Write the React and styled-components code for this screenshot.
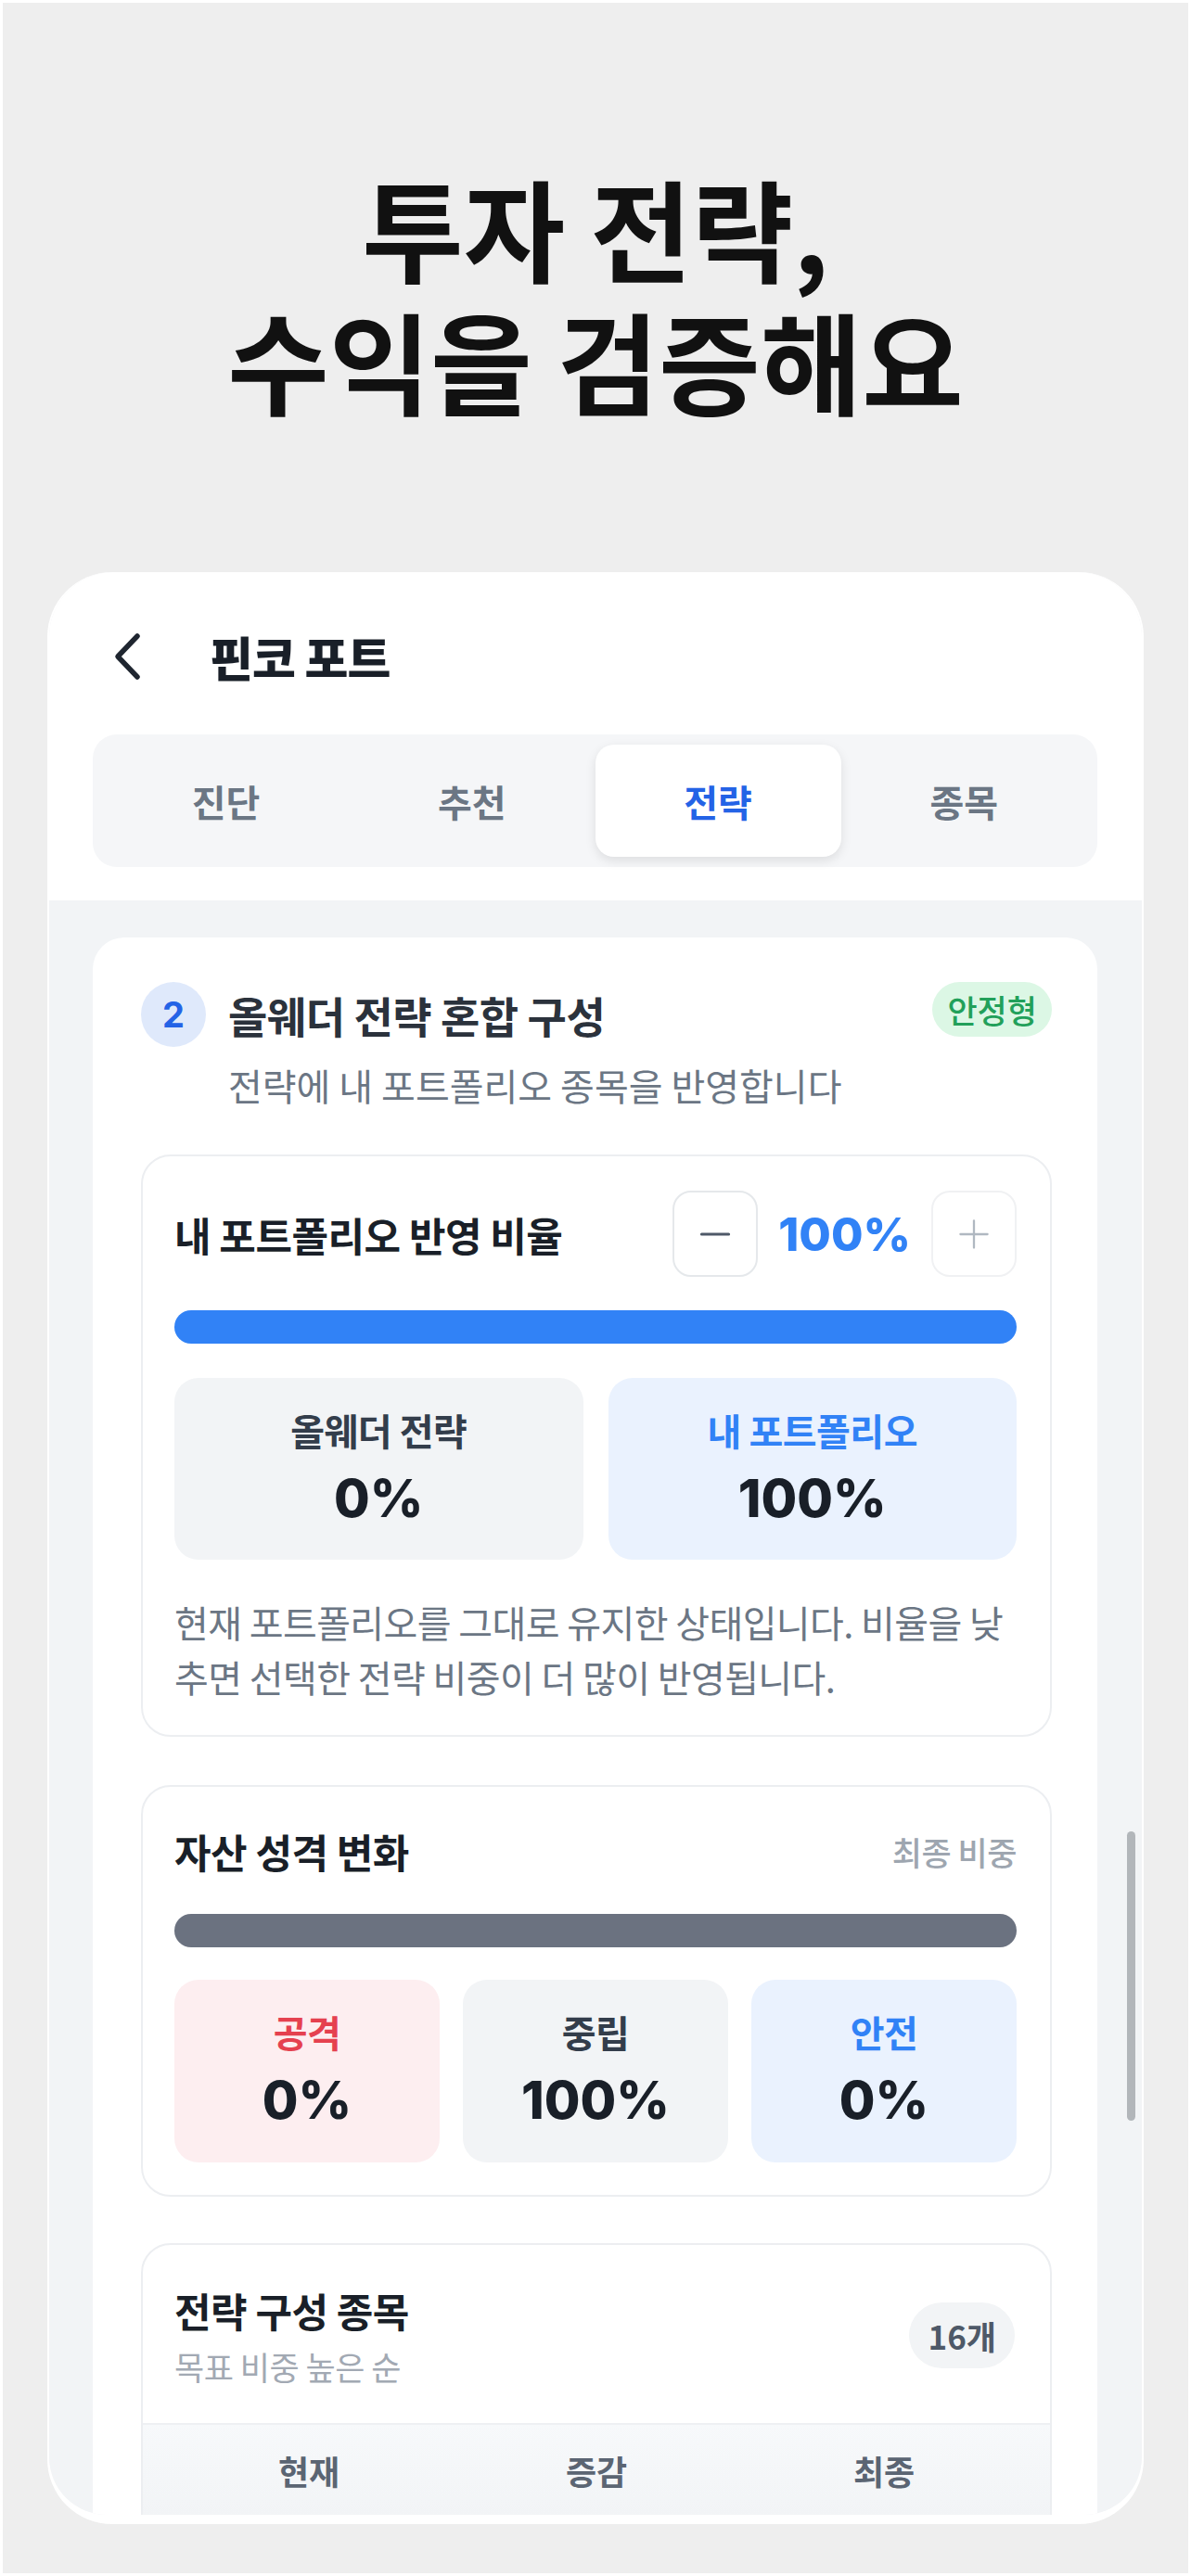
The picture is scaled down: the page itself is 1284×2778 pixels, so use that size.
import React from "react";
import styled, { createGlobalStyle } from "styled-components";
import { Minus, Plus } from "lucide-react";

const GlobalStyle = createGlobalStyle`
  html, body {
    margin: 0;
    padding: 0;
    background: #eeeeee;
  }
  body {
    font-family: "Noto Sans CJK KR", "Noto Sans", sans-serif;
    -webkit-font-smoothing: antialiased;
  }
  * {
    box-sizing: border-box;
  }
`;

const Page = styled.div`
  width: 1284px;
  min-height: 2778px;
  border: 3px solid #ffffff;
  background: #eeeeee;
  display: flex;
  flex-direction: column;
  align-items: center;
`;

const Hero = styled.h1`
  margin: 170px 0 0;
  font-size: 119px;
  line-height: 143px;
  font-weight: 700;
  color: #111111;
  text-align: center;
`;

const Phone = styled.div`
  margin-top: 158px;
  width: 1182px;
  height: 2105px;
  background: #ffffff;
  border-radius: 70px;
  padding: 0 2px 10px;
  overflow: hidden;
`;

const Screen = styled.div`
  position: relative;
  height: 100%;
  background: #f2f4f6;
  border-radius: 70px 70px 62px 62px;
  overflow: hidden;
`;

const Header = styled.div`
  background: #ffffff;
  padding: 41px 48px 36px 47px;
`;

const NavRow = styled.div`
  height: 100px;
  display: flex;
  align-items: center;
  padding-left: 22px;
  gap: 72px;
`;

const NavTitle = styled.div`
  font-size: 51px;
  font-weight: 800;
  color: #191f28;
  letter-spacing: -1px;
`;

const Tabs = styled.div`
  margin-top: 34px;
  height: 143px;
  padding: 11px;
  border-radius: 26px;
  background: #f5f6f8;
  display: grid;
  grid-template-columns: repeat(4, 1fr);
`;

const Tab = styled.div`
  display: flex;
  align-items: center;
  justify-content: center;
  border-radius: 20px;
  font-size: 40px;
  font-weight: 700;
  color: ${(p) => (p.$active ? "#2463e6" : "#6b7684")};
  background: ${(p) => (p.$active ? "#ffffff" : "transparent")};
  box-shadow: ${(p) => (p.$active ? "0 4px 12px rgba(0, 0, 0, 0.10)" : "none")};
`;

const Content = styled.div`
  padding: 40px 48px 0 47px;
`;

const Section = styled.div`
  background: #ffffff;
  border-radius: 34px;
  padding: 48px 49px 60px 52px;
`;

const SectionHead = styled.div`
  display: flex;
  align-items: flex-start;
`;

const StepCircle = styled.div`
  flex: none;
  width: 70px;
  height: 70px;
  border-radius: 50%;
  background: #dfe9fb;
  color: #2463e6;
  font-family: Inter, "Noto Sans CJK KR", sans-serif;
  font-size: 38px;
  font-weight: 700;
  display: flex;
  align-items: center;
  justify-content: center;
  margin-right: 24px;
`;

const HeadText = styled.div`
  flex: 1;
`;

const SectionTitle = styled.div`
  font-size: 46px;
  line-height: 70px;
  font-weight: 700;
  color: #2b323c;
  letter-spacing: -0.5px;
`;

const SectionSub = styled.div`
  margin-top: 16px;
  font-size: 40px;
  line-height: 50px;
  color: #6b7684;
`;

const TypeBadge = styled.div`
  flex: none;
  height: 59px;
  padding: 0 16px;
  border-radius: 30px;
  background: #dcf7e5;
  color: #22a05a;
  font-size: 35px;
  font-weight: 500;
  display: flex;
  align-items: center;
`;

const Card = styled.div`
  margin-top: ${(p) => p.$gap || 51}px;
  border: 2px solid #eceef1;
  border-radius: 32px;
  padding: ${(p) => p.$pad || "37px 36px 33px 34px"};
  overflow: hidden;
`;

const CardRow = styled.div`
  display: flex;
  align-items: center;
  justify-content: space-between;
  min-height: ${(p) => p.$h || 56}px;
`;

const CardTitle = styled.div`
  font-size: 43px;
  line-height: 56px;
  font-weight: 700;
  color: #191f28;
  letter-spacing: -0.5px;
`;

const Stepper = styled.div`
  display: flex;
  align-items: center;
  gap: 22px;
`;

const StepButton = styled.div`
  width: 92px;
  height: 93px;
  border-radius: 20px;
  border: 2px solid ${(p) => (p.$disabled ? "#f0f1f3" : "#e5e8eb")};
  background: #ffffff;
  color: ${(p) => (p.$disabled ? "#b0b8c1" : "#4e5968")};
  display: flex;
  align-items: center;
  justify-content: center;
`;

const RatioValue = styled.div`
  font-family: Inter, "Noto Sans CJK KR", sans-serif;
  font-size: 50px;
  font-weight: 800;
  color: #3182f6;
`;

const Bar = styled.div`
  margin-top: ${(p) => p.$gap}px;
  height: 36px;
  border-radius: 18px;
  background: ${(p) => p.$color};
`;

const BoxGrid = styled.div`
  margin-top: ${(p) => p.$gap}px;
  display: grid;
  grid-template-columns: repeat(${(p) => p.$cols}, 1fr);
  gap: ${(p) => (p.$cols === 2 ? 27 : 25)}px;
`;

const StatBox = styled.div`
  height: ${(p) => p.$h}px;
  border-radius: 26px;
  background: ${(p) => p.$bg};
  display: flex;
  flex-direction: column;
  align-items: center;
  padding-top: 29px;
  gap: 15px;
`;

const StatLabel = styled.div`
  font-size: 40px;
  line-height: 54px;
  font-weight: 600;
  color: ${(p) => p.$color};
  letter-spacing: -0.5px;
`;

const StatValue = styled.div`
  font-family: Inter, "Noto Sans CJK KR", sans-serif;
  font-size: 56px;
  line-height: 64px;
  font-weight: 800;
  color: #191f28;
`;

const Desc = styled.p`
  margin: 38px 0 0;
  font-size: 40px;
  line-height: 59px;
  color: #6b7684;
  letter-spacing: -0.6px;
`;

const Hint = styled.div`
  font-size: 35px;
  font-weight: 500;
  color: #9ea6b0;
  letter-spacing: -0.5px;
`;

const ListHead = styled.div`
  padding: 42px 38px 39px 34px;
  display: flex;
  align-items: center;
  justify-content: space-between;
`;

const ListSub = styled.div`
  margin-top: 11px;
  font-size: 35px;
  line-height: 44px;
  color: #a2a9b3;
  letter-spacing: -0.5px;
`;

const CountPill = styled.div`
  height: 71px;
  padding: 0 20px;
  border-radius: 36px;
  background: #f2f4f6;
  color: #4e5968;
  font-size: 35px;
  font-weight: 600;
  display: flex;
  align-items: center;
`;

const TableHead = styled.div`
  height: 100px;
  border-top: 2px solid #eef0f3;
  background: linear-gradient(#f7f9fb, #f2f4f6);
  display: grid;
  grid-template-columns: repeat(3, 1fr);
  padding: 0 24px;
`;

const TableHeadCell = styled.div`
  display: flex;
  align-items: center;
  justify-content: center;
  font-size: 36px;
  font-weight: 700;
  color: #5b6573;
`;

const ScrollThumb = styled.div`
  position: absolute;
  top: 1358px;
  right: 7px;
  width: 9px;
  height: 312px;
  border-radius: 5px;
  background: #b2b6ba;
`;

const BackIcon = () => (
  <svg width="32" height="52" viewBox="0 0 32 52" fill="none">
    <polyline
      points="26,4 5,26 26,48"
      stroke="#1f2630"
      strokeWidth="5.5"
      strokeLinecap="round"
      strokeLinejoin="round"
    />
  </svg>
);

const tabs = ["진단", "추천", "전략", "종목"];

const traits = [
  { label: "공격", value: "0%", bg: "#fdeef0", color: "#e5414f" },
  { label: "중립", value: "100%", bg: "#f2f4f6", color: "#333d4b" },
  { label: "안전", value: "0%", bg: "#eaf2fe", color: "#3182f6" },
];

export default function App() {
  return (
    <>
      <GlobalStyle />
      <Page>
        <Hero>
          투자 전략,
          <br />
          수익을 검증해요
        </Hero>

        <Phone>
          <Screen>
            <Header>
              <NavRow>
                <BackIcon />
                <NavTitle>핀코 포트</NavTitle>
              </NavRow>
              <Tabs>
                {tabs.map((t) => (
                  <Tab key={t} $active={t === "전략"}>
                    {t}
                  </Tab>
                ))}
              </Tabs>
            </Header>

            <Content>
              <Section>
                <SectionHead>
                  <StepCircle>2</StepCircle>
                  <HeadText>
                    <SectionTitle>올웨더 전략 혼합 구성</SectionTitle>
                    <SectionSub>전략에 내 포트폴리오 종목을 반영합니다</SectionSub>
                  </HeadText>
                  <TypeBadge>안정형</TypeBadge>
                </SectionHead>

                <Card $gap={50}>
                  <CardRow $h={93}>
                    <CardTitle>내 포트폴리오 반영 비율</CardTitle>
                    <Stepper>
                      <StepButton>
                        <Minus size={50} strokeWidth={1.5} />
                      </StepButton>
                      <RatioValue>100%</RatioValue>
                      <StepButton $disabled>
                        <Plus size={50} strokeWidth={1.1} />
                      </StepButton>
                    </Stepper>
                  </CardRow>
                  <Bar $gap={36} $color="#3182f6" />
                  <BoxGrid $gap={37} $cols={2}>
                    <StatBox $h={196} $bg="#f2f4f6">
                      <StatLabel $color="#333d4b">올웨더 전략</StatLabel>
                      <StatValue>0%</StatValue>
                    </StatBox>
                    <StatBox $h={196} $bg="#eaf2fe">
                      <StatLabel $color="#3182f6">내 포트폴리오</StatLabel>
                      <StatValue>100%</StatValue>
                    </StatBox>
                  </BoxGrid>
                  <Desc>
                    현재 포트폴리오를 그대로 유지한 상태입니다. 비율을 낮추면 선택한 전략 비중이 더 많이 반영됩니다.
                  </Desc>
                </Card>

                <Card $gap={52} $pad="41px 36px 35px 34px">
                  <CardRow>
                    <CardTitle>자산 성격 변화</CardTitle>
                    <Hint>최종 비중</Hint>
                  </CardRow>
                  <Bar $gap={40} $color="#6b7280" />
                  <BoxGrid $gap={35} $cols={3}>
                    {traits.map((t) => (
                      <StatBox key={t.label} $h={197} $bg={t.bg}>
                        <StatLabel $color={t.color}>{t.label}</StatLabel>
                        <StatValue>{t.value}</StatValue>
                      </StatBox>
                    ))}
                  </BoxGrid>
                </Card>

                <Card $gap={50} $pad="0">
                  <ListHead>
                    <div>
                      <CardTitle>전략 구성 종목</CardTitle>
                      <ListSub>목표 비중 높은 순</ListSub>
                    </div>
                    <CountPill>16개</CountPill>
                  </ListHead>
                  <TableHead>
                    <TableHeadCell>현재</TableHeadCell>
                    <TableHeadCell>증감</TableHeadCell>
                    <TableHeadCell>최종</TableHeadCell>
                  </TableHead>
                  <div style={{ height: 300 }} />
                </Card>
              </Section>
            </Content>

            <ScrollThumb />
          </Screen>
        </Phone>
      </Page>
    </>
  );
}
